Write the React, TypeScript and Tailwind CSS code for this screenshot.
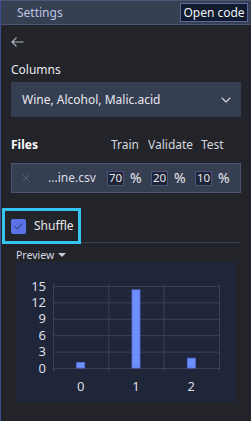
import { ChevronDown, X, Check } from "lucide-react";

const yTicks = [15, 12, 9, 6, 3, 0];
const bars = [
  { label: "0", value: 1 },
  { label: "1", value: 14.3 },
  { label: "2", value: 1.8 },
];

function Chart() {
  // plot area in svg coords (panel is 220x140, left at x=16, top at y=263)
  const left = 37;
  const right = 203;
  const top = 24;
  const bottom = 106;
  const colW = (right - left) / 3;
  const y = (v: number) => bottom - (v / 15) * (bottom - top);
  return (
    <svg width="220" height="140" viewBox="0 0 220 140">
      {yTicks.map((t) => (
        <g key={t}>
          <line x1={left} x2={right} y1={y(t) + 0.5} y2={y(t) + 0.5} stroke="#3c4152" strokeWidth="1" />
          <text
            x={left - 7}
            y={y(t) + 4.5}
            textAnchor="end"
            fill="#dcdee4"
            fontSize="13"
            fontFamily="Noto Sans, sans-serif"
          >
            {t}
          </text>
        </g>
      ))}
      {[0, 1, 2, 3].map((i) => (
        <line
          key={i}
          x1={left + i * colW + 0.5}
          x2={left + i * colW + 0.5}
          y1={top - 2}
          y2={bottom + 4}
          stroke="#3c4152"
          strokeWidth="1"
        />
      ))}
      {bars.map((b, i) => {
        const cx = left + i * colW + colW / 2;
        return (
          <g key={b.label}>
            <rect
              x={cx - 4}
              y={y(b.value)}
              width="8"
              height={bottom - y(b.value)}
              fill="#6e8efb"
              stroke="#5470e0"
              strokeWidth="0.8"
            />
            <text
              x={cx}
              y={bottom + 23}
              textAnchor="middle"
              fill="#dcdee4"
              fontSize="13"
              fontFamily="Noto Sans, sans-serif"
            >
              {b.label}
            </text>
          </g>
        );
      })}
    </svg>
  );
}

function Pct({ value }: { value: string }) {
  return (
    <div className="flex items-center">
      <span className="flex h-[15px] w-[17px] items-center justify-center border border-[#4a5577] bg-[#1e2437] text-[11.5px] leading-none text-[#e6e8ee]">
        {value}
      </span>
      <span className="ml-[6px] w-[13px] text-[14px] leading-none text-[#e6e8ee]">%</span>
    </div>
  );
}

export default function App() {
  return (
    <div className="flex h-[421px] w-[251px] flex-col overflow-hidden border-l border-[#3d4c8e] bg-[#232429] font-['Noto_Sans',sans-serif]">
      <div className="flex h-[25px] shrink-0 items-center justify-between border-b border-t border-[#4b5576] bg-[#373f53] pl-4 pr-[3px]">
        <span className="text-[12px] text-[#bcc6e4]">Settings</span>
        <button className="flex h-[19px] w-[68px] items-center justify-center border border-[#5b6a9c] bg-[#111a2e] text-[12px] leading-none text-[#eef0f6]">
          Open code
        </button>
      </div>

      <div className="flex flex-col px-[10px]">
        <svg width="13" height="10" viewBox="0 0 13 10" className="mt-[12px]">
          <path d="M12.5 5 H1 M5.5 0.6 L1 5 L5.5 9.4" stroke="#b5b8c2" strokeWidth="1.2" fill="none" />
        </svg>

        <div className="mt-[15px] text-[12px] leading-4 text-[#e8eaf0]">Columns</div>
        <div className="mt-[4px] flex h-[35px] items-center justify-between bg-[#363e51] pl-[11px] pr-[7px]">
          <span className="text-[12px] text-[#e6e8ee]">Wine, Alcohol, Malic.acid</span>
          <ChevronDown className="h-[16px] w-[16px] text-[#d6d9e2]" strokeWidth={1.6} />
        </div>

        <div className="mt-[20px] flex items-center text-[12px] leading-4">
          <span className="w-[100px] font-bold text-white">Files</span>
          <span className="w-[37px] text-[#d3d6de]">Train</span>
          <span className="w-[53px] text-[#d3d6de]">Validate</span>
          <span className="text-[#d3d6de]">Test</span>
        </div>
        <div className="mt-[10px] flex h-[30px] items-center border border-[#4a5370] bg-[#363e51] pl-[8px]">
          <X className="h-[12px] w-[12px] text-[#5e6884]" strokeWidth={1.6} />
          <span className="ml-[16px] w-[59px] text-[12px] text-[#d9dce4]">...ine.csv</span>
          <div className="flex gap-[8px]">
            <Pct value="70" />
            <Pct value="20" />
            <Pct value="10" />
          </div>
        </div>
      </div>

      <div className="mt-[15px] flex items-end pr-[10px]">
        <div className="ml-px flex h-[36px] w-[79px] items-center border-[3px] border-[#36c5f0] pl-[6px]">
          <span className="flex h-[15px] w-[15px] items-center justify-center rounded-[2px] bg-[#5b72e6]">
            <Check className="h-[11px] w-[11px] text-[#1d2436]" strokeWidth={1.8} />
          </span>
          <span className="ml-[8px] text-[12px] text-[#e6e8ee]">Shuffle</span>
        </div>
        <div className="mb-px h-px flex-1 bg-[#3b404e]" />
      </div>

      <div className="ml-[15px] mt-[4px] flex h-[14px] items-center text-[10.5px] leading-[14px] text-[#d6d9e2]">
        Preview
        <svg width="8" height="4" viewBox="0 0 8 4" className="ml-[4px]">
          <path d="M0 0 L8 0 L4 4 Z" fill="#c9ccd6" />
        </svg>
      </div>
      <div className="ml-[15px] h-[140px] w-[220px] shrink-0 bg-[#20263a]">
        <Chart />
      </div>
    </div>
  );
}
